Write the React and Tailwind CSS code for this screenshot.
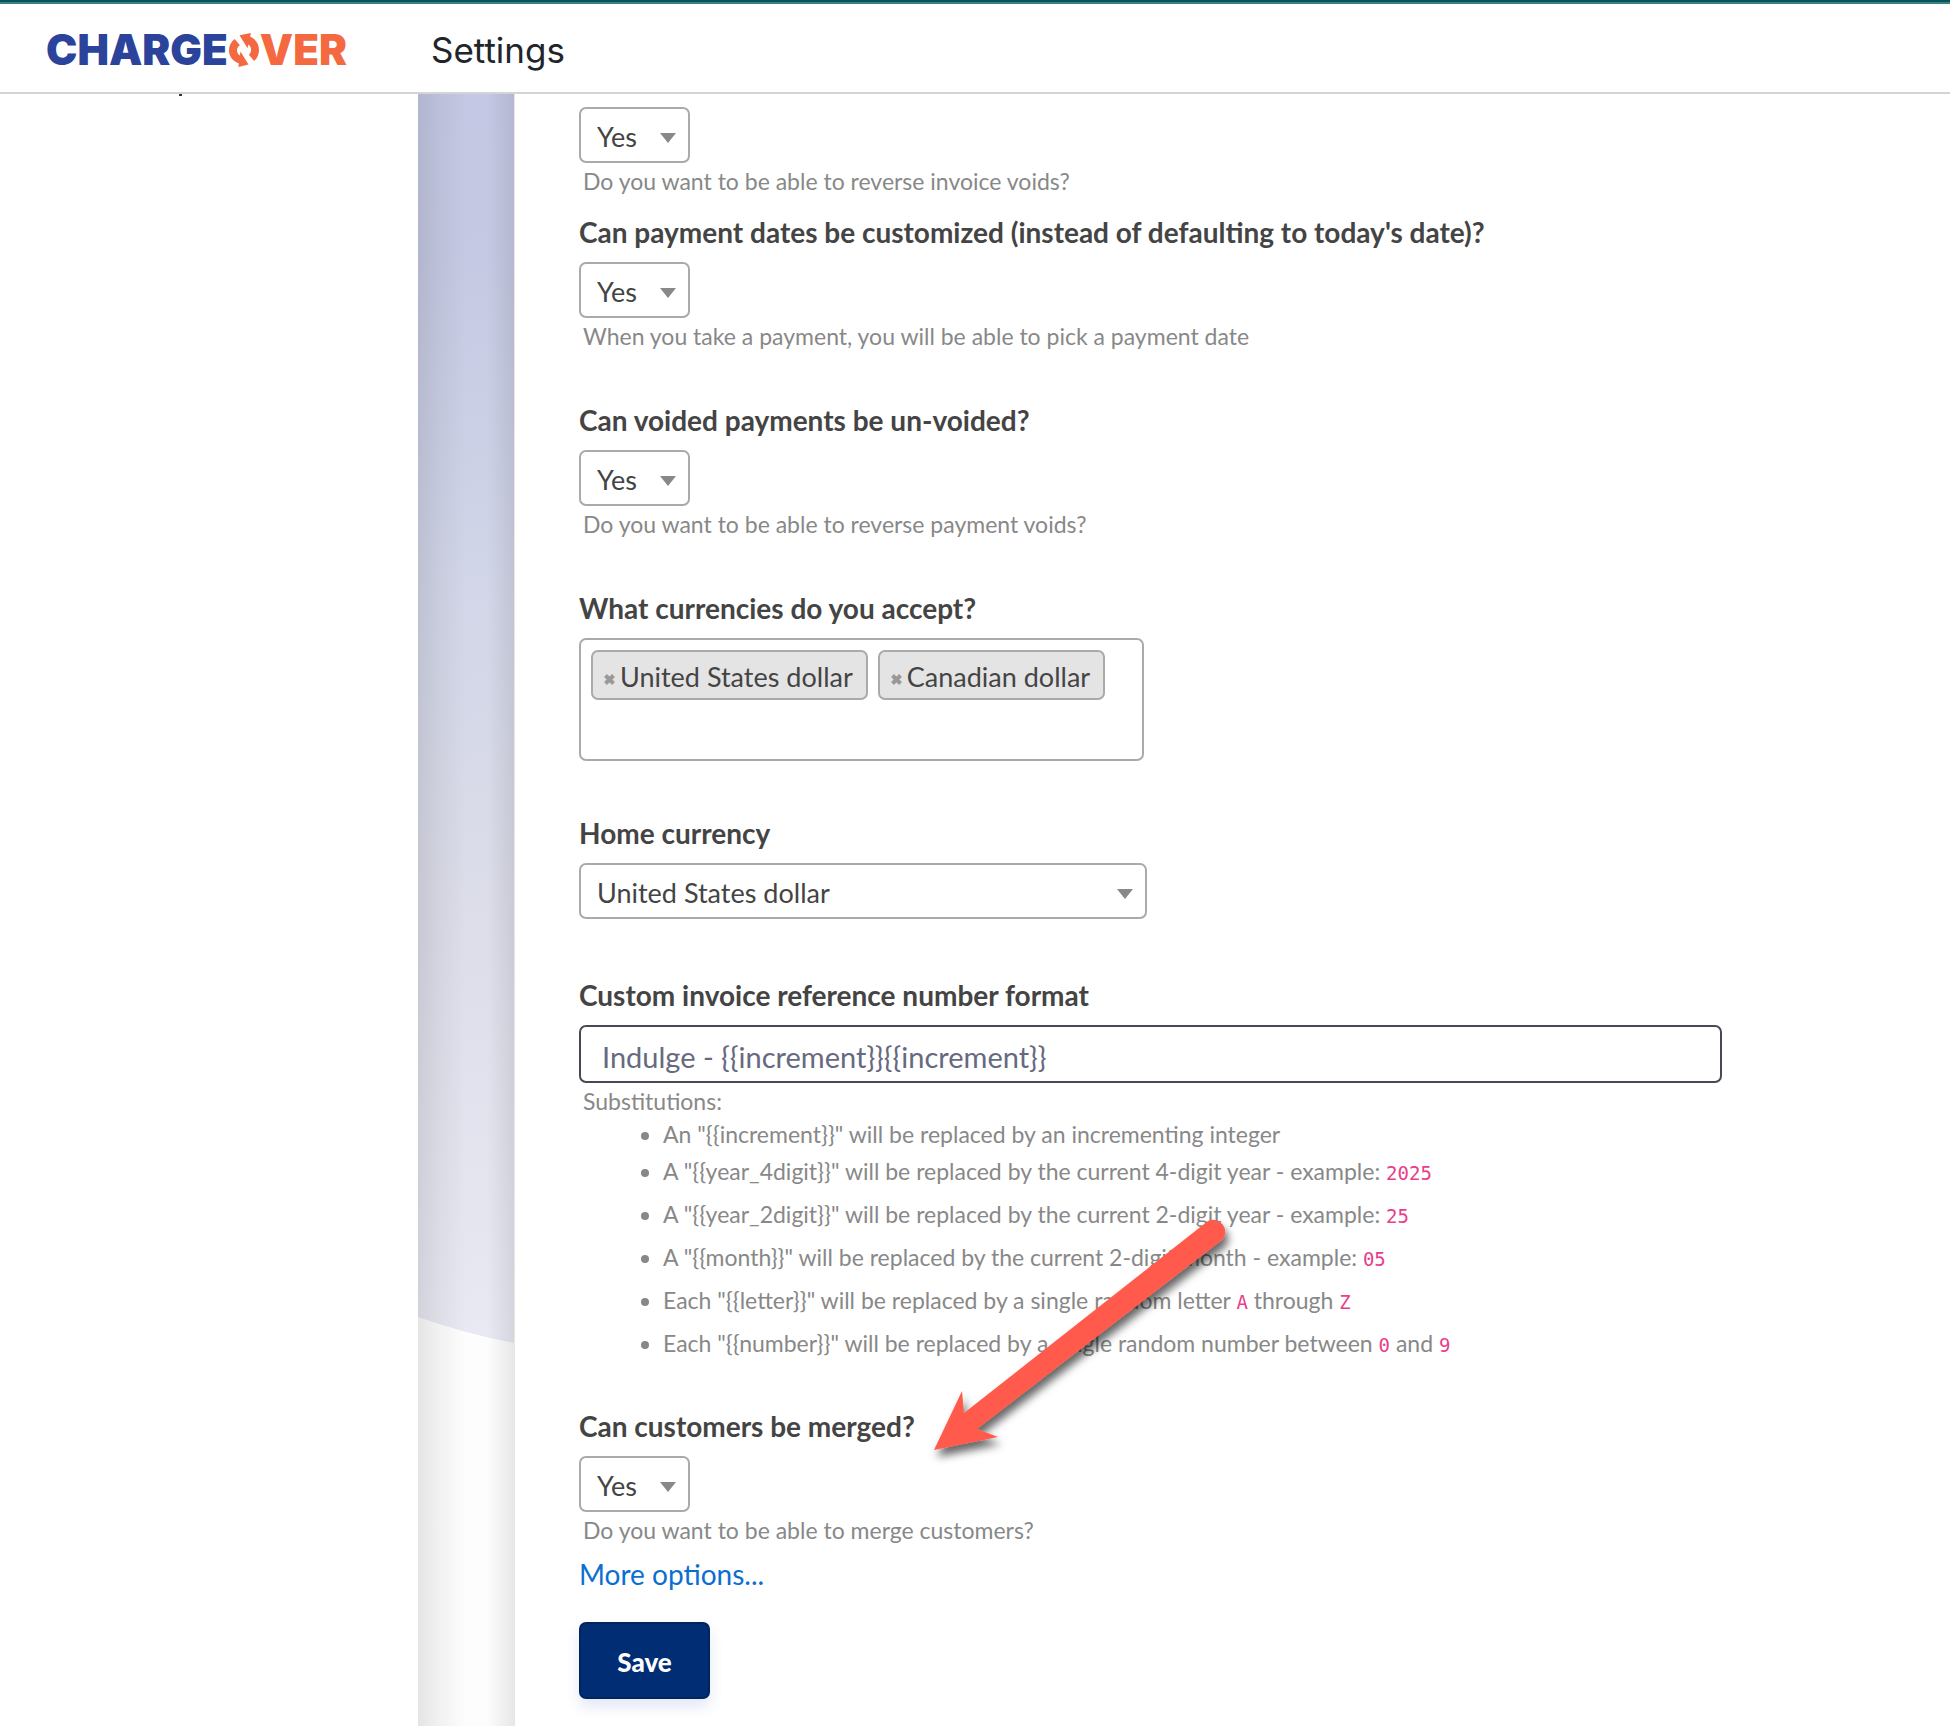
import { useState } from "react";

function SelectBox({ id, label, options, width }) {
  const [value, setValue] = useState(options[0]);
  return (
    <div className={"relative h-14 max-w-full " + width}>
      <select
        id={id}
        aria-label={label}
        value={value}
        onChange={(e) => setValue(e.target.value)}
        className="block h-full w-full appearance-none rounded-[7px] border-2 border-[#aaaaaa] bg-white pt-1 pr-9 pl-4 text-[27px] text-[#444444]"
      >
        {options.map((o) => (
          <option key={o}>{o}</option>
        ))}
      </select>
      <svg
        viewBox="0 0 16 10"
        aria-hidden="true"
        className="pointer-events-none absolute top-[26px] right-[14px] h-[10px] w-4"
      >
        <path d="M0 0h16L8 10z" fill="#888888" />
      </svg>
    </div>
  );
}

function Label({ htmlFor, children }) {
  return (
    <label htmlFor={htmlFor} className="mb-[10px] block text-[28px] leading-10 font-bold text-[#444444]">
      {children}
    </label>
  );
}

function Help({ children }) {
  return <p className="mt-1 pl-1 text-[23px] leading-7 text-[#888888]">{children}</p>;
}

function YesNo({ id, label, help, className }) {
  return (
    <div className={className}>
      <Label htmlFor={id}>{label}</Label>
      <SelectBox id={id} options={["Yes", "No"]} width="w-[111px]" />
      <Help>{help}</Help>
    </div>
  );
}

function Tag({ children }) {
  return (
    <li className="flex h-[50px] items-center gap-[5px] rounded-[7px] border-2 border-[#aaaaaa] bg-[#e4e4e4] pr-[13px] pl-[11px]">
      <button type="button" aria-label={"Remove " + children} className="mt-2">
        <svg viewBox="0 0 11 11" className="h-[11px] w-[11px]">
          <path d="M1.500 1.500l8 8M9.500 1.500l-8 8" stroke="#999999" strokeWidth="4" />
        </svg>
      </button>
      <span className="pt-1 text-[27px] leading-10 text-[#444444]">{children}</span>
    </li>
  );
}

function Code({ children }) {
  return (
    <code className="font-['DejaVu_Sans_Mono',monospace] text-[19px] leading-none text-[#e83e8c]">{children}</code>
  );
}

function Logo() {
  return (
    <a
      href="#home"
      aria-label="ChargeOver"
      className="flex items-center font-['Inter',sans-serif] text-[42px] leading-[50px] font-black"
    >
      <span className="text-[#2b439b]">CHARGE</span>
      <svg viewBox="0 0 32 36" aria-hidden="true" className="h-9 w-8" fill="#f4693f">
        <path d="M11.500 3.200L22.800 1l-.6 3.800C27.500 7 31 11.800 31 18c0 4.600-1.800 8.300-4.800 10.900l-5.300-6.200c1.400-1.300 2.200-2.800 2.200-4.900 0-2.300-1-4.100-2.800-5.300l-.8 3.700z" />
        <path d="M20.500 32.600L10.400 35l.4-3.700C5 29.400 1 24.600 1 18.300 1 13.600 3 9.600 6.700 6.900l5.200 6.300C10 14.400 9 16 9 18.200c0 2.300 1 4 2.800 5.200l.7-3.900z" />
      </svg>
      <span className="text-[#f4693f]">VER</span>
    </a>
  );
}

function Backdrop() {
  return (
    <div className="flex w-[97px] shrink-0 flex-col border-r border-[#ece3e3]">
      <svg viewBox="0 0 96 1632" preserveAspectRatio="none" aria-hidden="true" className="h-full min-h-[1632px] w-full">
        <defs>
          <linearGradient id="sky" x1="0" y1="0" x2="0" y2="1250" gradientUnits="userSpaceOnUse">
            <stop offset="0" stopColor="#c5c9e5" />
            <stop offset="0.13" stopColor="#c6cae4" />
            <stop offset="0.4" stopColor="#d3d7e9" />
            <stop offset="0.65" stopColor="#dddeea" />
            <stop offset="1" stopColor="#e9eaf3" />
          </linearGradient>
          <linearGradient id="edges" x1="0" y1="0" x2="1" y2="0">
            <stop offset="0" stopColor="#000" stopOpacity="0.1" />
            <stop offset="0.22" stopColor="#000" stopOpacity="0.05" />
            <stop offset="0.5" stopColor="#000" stopOpacity="0.005" />
            <stop offset="0.72" stopColor="#000" stopOpacity="0.005" />
            <stop offset="1" stopColor="#000" stopOpacity="0.09" />
          </linearGradient>
        </defs>
        <rect width="96" height="1632" fill="#fefefe" />
        <path d="M0 0H96V1249Q45 1239 0 1223Z" fill="url(#sky)" />
        <rect width="96" height="1632" fill="url(#edges)" />
      </svg>
    </div>
  );
}

function Arrow() {
  return (
    <svg
      viewBox="0 0 320 260"
      aria-hidden="true"
      className="pointer-events-none absolute top-[-199px] left-[346px] h-[260px] w-[320px] overflow-visible"
    >
      <defs>
        <filter id="arrowShadow" x="-10%" y="-10%" width="125%" height="130%">
          <feDropShadow dx="3" dy="7" stdDeviation="4" floodColor="#000" floodOpacity="0.6" />
        </filter>
      </defs>
      <path
        d="M9 243L37 184L39 206L283 14A12 12 0 0 1 297 33L52 222L73 230Z"
        fill="#ff5a4c"
        filter="url(#arrowShadow)"
      />
    </svg>
  );
}

export default function App() {
  const [format, setFormat] = useState("Indulge - {{increment}}{{increment}}");
  return (
    <div className="flex min-h-screen flex-col bg-white font-['Lato',sans-serif]">
      <div className="h-[2px] shrink-0 bg-[#065559]" />
      <header className="flex h-[92px] shrink-0 items-center border-t-2 border-b-2 border-t-[#3a8085] border-b-[#d4d4d4] pt-1 pl-[46px]">
        <Logo />
        <h1 className="ml-[84px] font-['Inter',sans-serif] text-[35px] leading-[50px] text-[#212529]">Settings</h1>
      </header>

      <div className="flex grow">
        <aside className="w-[418px] shrink-0 bg-white">
          <div className="ml-[179px] h-[2px] w-[3px] bg-[#333333]" />
        </aside>
        <Backdrop />

        <main className="min-w-0 grow bg-white pt-[13px] pb-[27px] pl-16">
          <form onSubmit={(e) => e.preventDefault()}>
            <SelectBox
              id="unvoid-invoices"
              label="Can voided invoices be un-voided?"
              options={["Yes", "No"]}
              width="w-[111px]"
            />
            <Help>Do you want to be able to reverse invoice voids?</Help>

            <YesNo
              id="payment-dates"
              className="mt-[17px]"
              label="Can payment dates be customized (instead of defaulting to today's date)?"
              help="When you take a payment, you will be able to pick a payment date"
            />
            <YesNo
              id="unvoid-payments"
              className="mt-[50px]"
              label="Can voided payments be un-voided?"
              help="Do you want to be able to reverse payment voids?"
            />

            <div className="mt-[50px]">
              <Label>What currencies do you accept?</Label>
              <ul className="flex min-h-[123px] w-[565px] max-w-full flex-wrap content-start gap-[10px] rounded-[7px] border-2 border-[#aaaaaa] p-[10px]">
                <Tag>United States dollar</Tag>
                <Tag>Canadian dollar</Tag>
              </ul>
            </div>

            <div className="mt-[52px]">
              <Label htmlFor="home-currency">Home currency</Label>
              <SelectBox id="home-currency" options={["United States dollar", "Canadian dollar"]} width="w-[568px]" />
            </div>

            <div className="mt-14">
              <Label htmlFor="invoice-format">Custom invoice reference number format</Label>
              <input
                id="invoice-format"
                type="text"
                value={format}
                onChange={(e) => setFormat(e.target.value)}
                className="block h-[58px] w-5/6 rounded-[7px] border-2 border-[#4b4856] bg-white px-[21px] pt-1 text-[29px] text-[#67697f]"
              />
              <Help>Substitutions:</Help>
              <ul className="mt-[3px] list-disc pl-[84px] text-[23px] leading-[43px] text-[#888888]">
                <li className="leading-8">An "{"{{increment}}"}" will be replaced by an incrementing integer</li>
                <li>
                  A "{"{{year_4digit}}"}" will be replaced by the current 4-digit year - example: <Code>2025</Code>
                </li>
                <li>
                  A "{"{{year_2digit}}"}" will be replaced by the current 2-digit year - example: <Code>25</Code>
                </li>
                <li>
                  A "{"{{month}}"}" will be replaced by the current 2-digit month - example: <Code>05</Code>
                </li>
                <li>
                  Each "{"{{letter}}"}" will be replaced by a single random letter <Code>A</Code> through <Code>Z</Code>
                </li>
                <li>
                  Each "{"{{number}}"}" will be replaced by a single random number between <Code>0</Code> and{" "}
                  <Code>9</Code>
                </li>
              </ul>
            </div>

            <div className="relative mt-[41px]">
              <YesNo
                id="merge-customers"
                label="Can customers be merged?"
                help="Do you want to be able to merge customers?"
              />
              <Arrow />
            </div>

            <a href="#more" className="mt-3 block w-fit text-[28px] leading-9 text-[#0b6fd0]">
              More options...
            </a>
            <button
              type="submit"
              className="mt-[30px] block h-[77px] w-[131px] rounded-[7px] border-2 border-[#00265c] bg-[#002d74] pt-1 text-[26px] font-black text-white shadow-[0_8px_14px_rgba(60,90,200,0.14)]"
            >
              Save
            </button>
          </form>
        </main>
      </div>
    </div>
  );
}
